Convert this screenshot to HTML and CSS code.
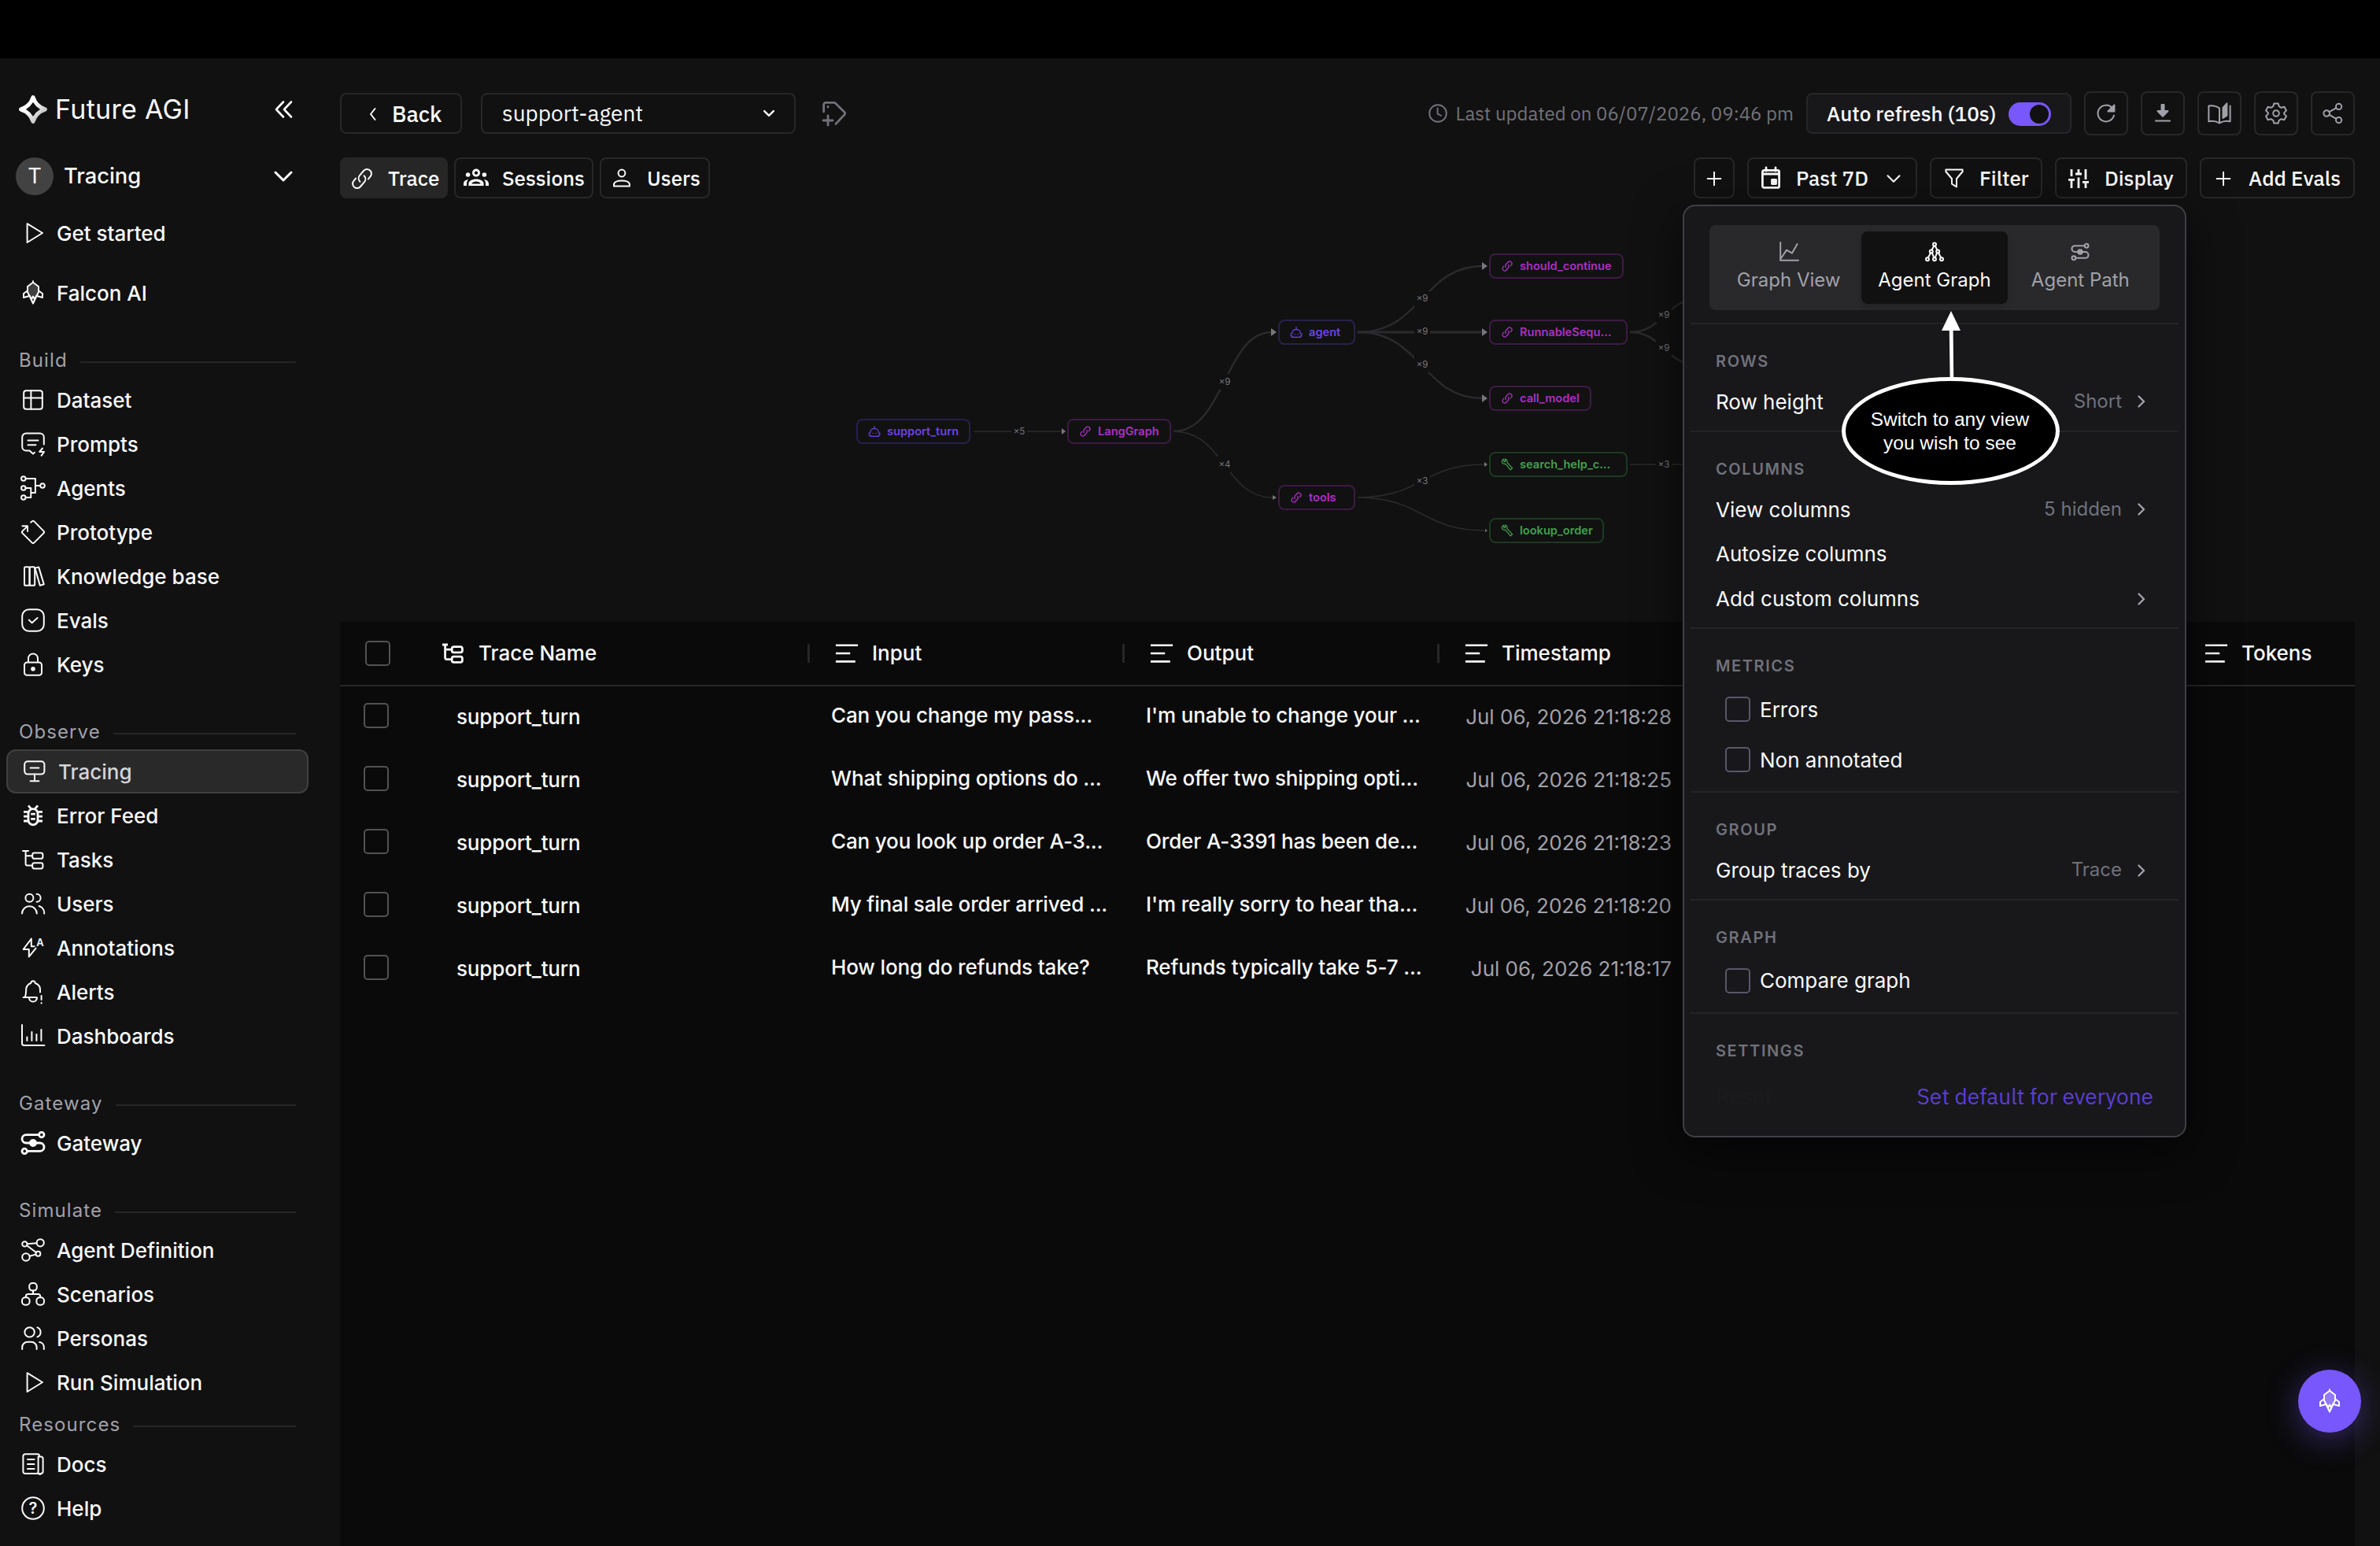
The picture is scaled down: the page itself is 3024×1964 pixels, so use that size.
FILE: index.html
```html
<!DOCTYPE html>
<html lang="en">
<head>
    <meta charset="UTF-8">
    <meta name="viewport" content="width=device-width, initial-scale=1.0">
    <title>Future AGI - Tracing</title>
    <link rel="stylesheet" href="styles.css">
</head>
<body>
    <!-- shared icons -->
    <svg class="sprite">
        <symbol id="i-play" viewBox="0 0 32 32"><path d="M8.6 4.2L28 16L8.6 28Z"/></symbol>
        <symbol id="i-falcon" viewBox="0 0 32 32">
            <path class="tint" d="M16 2.8L9 8V15L11.5 20L16 29.5L20.5 20L23 15V8Z"/>
            <path d="M8.6 13.5L4 17V22L10.2 20.2M23.4 13.5L28 17V22L21.8 20.2M11.5 19.5L14 24L16 20.5L18 24L20.5 19.5M16 1.2V3"/>
        </symbol>
        <symbol id="i-users" viewBox="0 0 32 32">
            <circle cx="11.4" cy="8.8" r="5"/>
            <path d="M20.6 3.8a5 5 0 0 1 0 10M2 28.6a9.4 9.4 0 0 1 18.8 0M23.6 19a9.4 9.4 0 0 1 6.6 9.6"/>
        </symbol>
        <symbol id="i-tree" viewBox="0 0 32 32">
            <path d="M3 5H10M6.6 5V21.6a2 2 0 0 0 2 2H15M6.6 11.2H15"/>
            <rect x="15.2" y="7.6" width="13.2" height="7.2" rx="2.4"/>
            <rect x="15.2" y="20.2" width="13.2" height="7.2" rx="2.4"/>
        </symbol>
        <symbol id="i-path" viewBox="0 0 32 32">
            <circle cx="26.8" cy="5.6" r="3.2"/>
            <circle cx="5.2" cy="26.4" r="3.2"/>
            <path d="M23.4 5.6H7.2a5.2 5.2 0 0 0 0 10.4H24.8a5.2 5.2 0 0 1 0 10.4H8.6"/>
            <circle class="dot" cx="16" cy="16" r="3.6"/>
        </symbol>
        <symbol id="i-link" viewBox="0 0 32 32">
            <path d="M13.4 19.8A6 6 0 0 1 13.2 11.6L18 6A5.6 5.6 0 0 1 26.6 13.2L24 16.4M18.6 12.2A6 6 0 0 1 18.8 20.4L14 26A5.6 5.6 0 0 1 5.4 18.8L8 15.6"/>
        </symbol>
        <symbol id="i-bot" viewBox="0 0 16 16">
            <path d="M8 1V4.6M2.8 10V9a4.4 4.4 0 0 1 4.4-4.4H8.8a4.4 4.4 0 0 1 4.4 4.4V10M2.8 10H1.2V13H2.8V14.4H13.2V13H14.8V10H13.2"/>
            <path d="M6 10V11M10 10V11"/>
        </symbol>
        <symbol id="i-tool" viewBox="0 0 16 16">
            <path d="M3.6 1.2A3.4 3.4 0 0 0 1.4 4.8C1.8 6.8 4 7.8 5.8 7.2L12.2 14.8L14.6 12.8L8 5.6C8.6 3.6 7.4 1.6 5.6 1.2V4.2L4 4.6Z"/>
        </symbol>
        <symbol id="i-lines" viewBox="0 0 32 32"><path d="M1 5H31M1 16H20.5M1 27H27.5"/></symbol>
        <symbol id="i-right" viewBox="0 0 16 16"><path d="M4.5 1.5L11 8L4.5 14.5"/></symbol>
        <symbol id="i-down" viewBox="0 0 24 24"><path d="M2 7L12 17L22 7"/></symbol>
        <symbol id="i-plus" viewBox="0 0 24 24"><path d="M12 2V22M2 12H22"/></symbol>
    </svg>

    <div class="titlebar"></div>
    <div class="app">
        <aside class="sidebar">
            <div class="brand">
                <svg class="logo" viewBox="0 0 36 36">
                    <defs>
                        <linearGradient id="metal" x1="0" y1="0" x2="1" y2="1">
                            <stop offset=".4" stop-color="#fff"/>
                            <stop offset="1" stop-color="#a8a8a8"/>
                        </linearGradient>
                    </defs>
                    <path d="M18 2.6C20.6 10.8 25.2 15.4 33.4 18C25.2 20.6 20.6 25.2 18 33.4C15.4 25.2 10.8 20.6 2.6 18C10.8 15.4 15.4 10.8 18 2.6Z" fill="none" stroke="url(#metal)" stroke-width="5" stroke-linejoin="round"/>
                </svg>
                <span class="brand-name">Future AGI</span>
                <svg class="icon collapse" viewBox="0 0 24 24"><path d="M12 2.5L3 12L12 21.5M22 2.5L13 12L22 21.5"/></svg>
            </div>
            <div class="workspace">
                <span class="avatar">T</span>
                <span>Tracing</span>
                <svg class="icon caret"><use href="#i-down"/></svg>
            </div>

            <nav>
                <a class="nav-item"><svg class="icon"><use href="#i-play"/></svg>Get started</a>
                <a class="nav-item spaced"><svg class="icon"><use href="#i-falcon"/></svg>Falcon AI</a>

                <h6 class="nav-heading">Build</h6>
                <a class="nav-item"><svg class="icon" viewBox="0 0 32 32"><rect x="4.2" y="4.2" width="23.6" height="23.6" rx="3"/><path d="M4.2 13.4H27.8M13.4 4.2V27.8"/></svg>Dataset</a>
                <a class="nav-item"><svg class="icon" viewBox="0 0 32 32"><path d="M29.8 16.5V7.5a5 5 0 0 0-5-5H7.2a5 5 0 0 0-5 5V19.5a5 5 0 0 0 5 5H11.5L16 28.6L18 26.8M9.5 11.4H22.5M9.5 17.2H19.5M28 21.5L24.2 26H30L26.6 30.8"/></svg>Prompts</a>
                <a class="nav-item"><svg class="icon" viewBox="0 0 32 32"><circle cx="3.8" cy="4" r="2.8"/><circle cx="3.8" cy="16" r="2.8"/><circle cx="3.8" cy="28" r="2.8"/><circle cx="28" cy="13" r="2.8"/><path d="M6.8 4H18.9V22H13.3M6.8 16H13.3V28H6.8M18.9 13H25"/></svg>Agents</a>
                <a class="nav-item"><svg class="icon" viewBox="0 0 32 32"><path d="M13.2 3.6L14.6 2.4a2 2 0 0 1 2.8 0L29.4 14.6a2 2 0 0 1 0 2.8L17.4 29.4a2 2 0 0 1-2.8 0L2.6 17.4a2 2 0 0 1 0-2.8L8.8 8.6M2.4 8.2H9V15"/></svg>Prototype</a>
                <a class="nav-item"><svg class="icon" viewBox="0 0 32 32"><rect x="5" y="4.2" width="6.6" height="23.6" rx="1.6"/><rect x="11.6" y="4.2" width="6.6" height="23.6" rx="1.6"/><path d="M18.4 5.6L23.2 4.4L29.8 26.4L24.8 27.8Z"/></svg>Knowledge base</a>
                <a class="nav-item"><svg class="icon" viewBox="0 0 32 32"><rect x="2.2" y="2.2" width="27.6" height="27.6" rx="8.5"/><path d="M10.8 15.6L14.6 19.2L21.6 13"/></svg>Evals</a>
                <a class="nav-item"><svg class="icon" viewBox="0 0 32 32"><rect x="5" y="13.4" width="22" height="16.4" rx="3.4"/><path d="M10 13V8.4a6 6 0 0 1 12 0V13"/><circle class="dot" cx="16" cy="21.8" r="1.8"/></svg>Keys</a>

                <h6 class="nav-heading">Observe</h6>
                <a class="nav-item active"><svg class="icon" viewBox="0 0 32 32"><rect x="3.2" y="3.2" width="25.2" height="16.4" rx="4"/><path d="M10.6 11.4H21.4M16 19.6V28.2M10.6 28.2H21.4"/></svg>Tracing</a>
                <a class="nav-item"><svg class="icon bug" viewBox="0 0 32 32"><rect x="10" y="7.6" width="12" height="20.2" rx="6"/><path d="M4 11.4H9.6M4 17.2H9.6M4 23H9.6M22.4 11.4H28M22.4 17.2H28M22.4 23H28M13.2 14.2H18.8M13.2 20.4H18.8M10 3.4L13.4 7.4M22 3.4L18.6 7.4"/></svg>Error Feed</a>
                <a class="nav-item"><svg class="icon"><use href="#i-tree"/></svg>Tasks</a>
                <a class="nav-item"><svg class="icon"><use href="#i-users"/></svg>Users</a>
                <a class="nav-item"><svg class="icon" viewBox="0 0 32 32"><path d="M13.8 4.6L3.6 18H10.8V27.4L19.6 16.6M13.8 4.6V14.2H17.6"/><text class="mark" x="25" y="14" font-size="13">A</text></svg>Annotations</a>
                <a class="nav-item"><svg class="icon" viewBox="0 0 32 32"><path d="M3.6 23H20.6M5.8 22.6C7.4 19 7 16 7.2 12.5C7.6 8.4 10 6.2 13.2 5C13.6 1.4 18.4 1.4 18.8 5C22.4 6.2 25 8.6 25 13V16.4M11 23.6a5 5 0 0 0 10 0M26.6 21V26M26.6 30V30.6"/></svg>Alerts</a>
                <a class="nav-item"><svg class="icon" viewBox="0 0 32 32"><path d="M2 2V25.6a2.4 2.4 0 0 0 2.4 2.4H30.4M8.4 17.4V22M14.4 11V22M20.4 14V22M26.4 8V22"/></svg>Dashboards</a>

                <h6 class="nav-heading">Gateway</h6>
                <a class="nav-item"><svg class="icon bold"><use href="#i-path"/></svg>Gateway</a>

                <h6 class="nav-heading">Simulate</h6>
                <a class="nav-item"><svg class="icon" viewBox="0 0 32 32"><circle cx="5.4" cy="8.4" r="3.2"/><circle cx="25.2" cy="6.8" r="4.6"/><circle cx="22.4" cy="20.8" r="3"/><circle cx="7" cy="25" r="4.8"/><path d="M8.6 8.2L20.6 7.2M8.2 10.2L19.8 19M11.6 23.8L19.4 21.6"/></svg>Agent Definition</a>
                <a class="nav-item"><svg class="icon" viewBox="0 0 32 32"><rect x="11.2" y="2" width="9.6" height="9.6" rx="4"/><rect x="2" y="20.2" width="9.6" height="9.6" rx="4"/><rect x="20.4" y="20.2" width="9.6" height="9.6" rx="4"/><path d="M16 11.6V16M6.8 20V19a3 3 0 0 1 3-3H22.2a3 3 0 0 1 3 3V20"/></svg>Scenarios</a>
                <a class="nav-item"><svg class="icon" viewBox="0 0 32 32"><circle cx="11.6" cy="8.4" r="6.2"/><path d="M21.4 2.4a6.4 6.4 0 0 1 0 12M2.2 30V27.6a6.8 6.8 0 0 1 6.8-6.8H13.8a6.8 6.8 0 0 1 6.8 6.8V30M24.2 21a6.4 6.4 0 0 1 5.6 6.4V30"/></svg>Personas</a>
                <a class="nav-item"><svg class="icon"><use href="#i-play"/></svg>Run Simulation</a>

                <h6 class="nav-heading tight">Resources</h6>
                <a class="nav-item"><svg class="icon" viewBox="0 0 32 32"><path d="M24 6.6V5.6a2.4 2.4 0 0 0-2.4-2.4H6a2.6 2.6 0 0 0-2.6 2.6V25.4a2.6 2.6 0 0 0 2.6 2.6H26.4a2.2 2.2 0 0 0 2.2-2.2V9a2.4 2.4 0 0 0-2.4-2.4H22.6V25.6a2 2 0 0 0 4 2M9 10H17.6M9 16H17.6M9 22H17.6"/></svg>Docs</a>
                <a class="nav-item"><svg class="icon" viewBox="0 0 32 32"><circle cx="16" cy="16" r="13.8"/><text class="mark" x="16" y="23.4" font-size="20">?</text></svg>Help</a>
            </nav>
        </aside>

        <main class="main">
            <div class="row header">
                <button class="btn back"><svg class="icon s14" viewBox="0 0 14 16"><path d="M9.5 1L4 8L9.5 15"/></svg>Back</button>
                <div class="select">support-agent<svg class="icon s14"><use href="#i-down"/></svg></div>
                <svg class="icon tag" viewBox="0 0 32 32"><path d="M2.6 14V5a2.6 2.6 0 0 1 2.6-2.6H15.5a3 3 0 0 1 2.3 1L29 14.4a2.4 2.4 0 0 1 0 3.2L18 29.4M8 7.4V8M8 19V31M2 25H14"/></svg>
                <div class="spacer"></div>
                <span class="updated"><svg class="icon s24" viewBox="0 0 24 24"><circle cx="12" cy="12" r="10.8"/><path d="M11.6 5.6V12.6L16 14.8"/></svg>Last updated on 06/07/2026, 09:46 pm</span>
                <div class="refresh">Auto refresh (10s)<span class="toggle"></span></div>
                <button class="square"><svg class="icon" viewBox="0 0 32 32"><path d="M26 18.6A10.4 10.4 0 1 1 23.6 9"/><path class="dot" d="M26.4 5.4V13.4H18.4Z"/></svg></button>
                <button class="square"><svg class="icon" viewBox="0 0 32 32"><path class="dot" d="M14.5 5H17.5V13H22.5L16 19.8L9.5 13H14.5Z"/><path d="M7 25.6H25"/></svg></button>
                <button class="square"><svg class="icon" viewBox="0 0 32 32"><path d="M16 9.5C12 6.4 7 5.8 2.4 6.4V26.2C7.4 25.4 12 26 16 28.4C20 26 24.6 25.4 29.6 26.2V6.4M16 9.5V28.4"/><path class="dot" d="M20.5 9L25.4 3.4V18.6L20.5 22Z"/></svg></button>
                <button class="square"><svg class="icon" viewBox="0 0 32 32"><circle cx="16" cy="16" r="3.8"/><path d="M13.4 3.4H18.6L19.8 7.2L22.6 8.8L26.4 7.8L29 12.4L26.2 15.2V16.8L29 19.6L26.4 24.2L22.6 23.2L19.8 24.8L18.6 28.6H13.4L12.2 24.8L9.4 23.2L5.6 24.2L3 19.6L5.8 16.8V15.2L3 12.4L5.6 7.8L9.4 8.8L12.2 7.2Z"/></svg></button>
                <button class="square"><svg class="icon" viewBox="0 0 32 32"><circle cx="8.2" cy="16" r="3.8"/><circle cx="23.6" cy="7.4" r="3.6"/><circle cx="23.6" cy="24.6" r="3.6"/><path d="M11.6 14.2L20.4 9.2M11.6 17.8L20.4 22.8"/></svg></button>
            </div>

            <div class="row toolbar">
                <button class="btn tab active"><svg class="icon"><use href="#i-link"/></svg>Trace</button>
                <button class="btn tab sessions"><svg class="icon solid" viewBox="0 0 32 32"><circle cx="5.6" cy="11" r="2.8"/><circle cx="26.4" cy="11" r="2.8"/><path fill-rule="evenodd" d="M16 3.6a5 5 0 1 1 0 10a5 5 0 1 1 0-10ZM16 6.4a2.2 2.2 0 1 0 0 4.4a2.2 2.2 0 1 0 0-4.4ZM6.4 25V22.4C6.4 18.8 11 16.6 16 16.6C21 16.6 25.6 18.8 25.6 22.4V25ZM10.2 22.4H21.8C20.6 20.6 18.6 19.6 16 19.6C13.4 19.6 11.4 20.6 10.2 22.4Z"/><path d="M0 25V22.4C0 19.6 2.4 17.6 6 17C4.6 18.4 4 20.4 4 22V25ZM32 25V22.4C32 19.6 29.6 17.6 26 17C27.4 18.4 28 20.4 28 22V25Z"/></svg>Sessions</button>
                <button class="btn tab people"><svg class="icon" viewBox="0 0 32 32"><circle cx="16" cy="9" r="4.4"/><path d="M6 25.6V23.6C6 20 11 18.4 16 18.4C21 18.4 26 20 26 23.6V25.6Z"/></svg>Users</button>
                <div class="spacer"></div>
                <button class="btn add"><svg class="icon s20"><use href="#i-plus"/></svg></button>
                <button class="btn range"><svg class="icon bold" viewBox="0 0 32 32"><rect x="5.4" y="5.4" width="21.2" height="22" rx="2"/><path d="M5.4 10H26.6M10 2V6M22 2V6"/><rect class="dot" x="17.5" y="17.5" width="5" height="5"/></svg>Past 7D<svg class="icon s18"><use href="#i-down"/></svg></button>
                <button class="btn filter"><svg class="icon" viewBox="0 0 32 32"><path d="M5.4 4.6H26.6V7L19 16V26.4L13 22.6V16L5.4 7Z"/></svg>Filter</button>
                <button class="btn display"><svg class="icon bug" viewBox="0 0 32 32"><path d="M7 4V13M7 17.4V28M3 17.4H11M16 4V10M12 10H20M16 14.6V28M25 4V17M21 20.4H29M25 20.4V28"/></svg>Display</button>
                <button class="btn evals"><svg class="icon s20"><use href="#i-plus"/></svg>Add Evals</button>
            </div>

            <!-- agent graph, drawn in window coordinates -->
            <svg class="graph" viewBox="432 268 2560 522">
                <g class="edges">
                    <path class="w2" d="M1237 548H1350"/>
                    <path class="w3" d="M1491 548C1556 548 1556 422 1616 422"/>
                    <path class="w2" d="M1491 548C1556 548 1556 632 1617 632"/>
                    <path class="w3" d="M1725 422C1807 422 1807 338 1884 338"/>
                    <path class="w4" d="M1725 422H1884"/>
                    <path class="w3" d="M1725 422C1807 422 1807 506 1884 506"/>
                    <path class="w2" d="M1725 632C1807 632 1807 590 1886 590"/>
                    <path class="w2" d="M1725 632C1807 632 1807 674 1886 674"/>
                    <path class="w3" d="M2071 422C2114 422 2114 380 2160 380"/>
                    <path class="w3" d="M2071 422C2114 422 2114 464 2160 464"/>
                    <path class="w2" d="M2071 590H2160"/>
                </g>
                <g class="heads">
                    <path d="M1349 544L1354 548L1349 552Z"/>
                    <path d="M1615 417L1622 422L1615 427Z"/>
                    <path d="M1617 629L1622 632L1617 635Z"/>
                    <path d="M1883 333L1890 338L1883 343Z"/>
                    <path d="M1883 417L1890 422L1883 427Z"/>
                    <path d="M1883 501L1890 506L1883 511Z"/>
                    <path d="M1886 587L1890 590L1886 593Z"/>
                    <path d="M1887 672L1890 674L1887 676Z"/>
                </g>
                <g class="counts">
                    <rect x="1285" y="538" width="20" height="20"/><text x="1295" y="552">×5</text>
                    <rect x="1546" y="475" width="20" height="20"/><text x="1556" y="489">×9</text>
                    <rect x="1546" y="580" width="20" height="20"/><text x="1556" y="594">×4</text>
                    <rect x="1797" y="370" width="20" height="20"/><text x="1807" y="383">×9</text>
                    <rect x="1797" y="411" width="20" height="20"/><text x="1807" y="425">×9</text>
                    <rect x="1797" y="453" width="20" height="20"/><text x="1807" y="467">×9</text>
                    <rect x="1797" y="602" width="20" height="20"/><text x="1807" y="615">×3</text>
                    <rect x="2104" y="390" width="20" height="20"/><text x="2114" y="404">×9</text>
                    <rect x="2104" y="432" width="20" height="20"/><text x="2114" y="446">×9</text>
                    <rect x="2104" y="580" width="20" height="20"/><text x="2114" y="594">×3</text>
                </g>
                <g class="node violet"><rect x="1089" y="533" width="143" height="30" rx="7"/><use href="#i-bot" x="1103" y="540" width="16" height="16"/><text x="1127" y="553">support_turn</text></g>
                <g class="node pink"><rect x="1357" y="533" width="130" height="30" rx="7"/><use href="#i-link" x="1371" y="540" width="16" height="16"/><text x="1395" y="553">LangGraph</text></g>
                <g class="node violet"><rect x="1625" y="407" width="96" height="30" rx="7"/><use href="#i-bot" x="1639" y="414" width="16" height="16"/><text x="1663" y="427">agent</text></g>
                <g class="node pink"><rect x="1625" y="617" width="96" height="30" rx="7"/><use href="#i-link" x="1639" y="624" width="16" height="16"/><text x="1663" y="637">tools</text></g>
                <g class="node pink"><rect x="1893" y="323" width="169" height="30" rx="7"/><use href="#i-link" x="1907" y="330" width="16" height="16"/><text x="1931" y="343">should_continue</text></g>
                <g class="node pink"><rect x="1893" y="407" width="174" height="30" rx="7"/><use href="#i-link" x="1907" y="414" width="16" height="16"/><text x="1931" y="427">RunnableSequ…</text></g>
                <g class="node pink"><rect x="1893" y="491" width="128" height="30" rx="7"/><use href="#i-link" x="1907" y="498" width="16" height="16"/><text x="1931" y="511">call_model</text></g>
                <g class="node green"><rect x="1893" y="575" width="174" height="30" rx="7"/><use href="#i-tool" x="1907" y="582" width="16" height="16"/><text x="1931" y="595">search_help_c…</text></g>
                <g class="node green"><rect x="1893" y="659" width="144" height="30" rx="7"/><use href="#i-tool" x="1907" y="666" width="16" height="16"/><text x="1931" y="679">lookup_order</text></g>
            </svg>

            <section class="table">
                <div class="tr th">
                    <div class="td check"><i class="box"></i></div>
                    <div class="td name"><svg class="icon bold"><use href="#i-tree"/></svg>Trace Name</div>
                    <div class="td"><svg class="icon"><use href="#i-lines"/></svg>Input</div>
                    <div class="td"><svg class="icon"><use href="#i-lines"/></svg>Output</div>
                    <div class="td"><svg class="icon"><use href="#i-lines"/></svg>Timestamp</div>
                    <div class="td"></div>
                    <div class="td"><svg class="icon"><use href="#i-lines"/></svg>Tokens</div>
                </div>
                <div class="tr">
                    <div class="td check"><i class="box"></i></div>
                    <div class="td name">support_turn</div>
                    <div class="td">Can you change my pass...</div>
                    <div class="td">I'm unable to change your ...</div>
                    <div class="td time">Jul 06, 2026 21:18:28</div>
                </div>
                <div class="tr">
                    <div class="td check"><i class="box"></i></div>
                    <div class="td name">support_turn</div>
                    <div class="td">What shipping options do ...</div>
                    <div class="td">We offer two shipping opti...</div>
                    <div class="td time">Jul 06, 2026 21:18:25</div>
                </div>
                <div class="tr">
                    <div class="td check"><i class="box"></i></div>
                    <div class="td name">support_turn</div>
                    <div class="td">Can you look up order A-3...</div>
                    <div class="td">Order A-3391 has been de...</div>
                    <div class="td time">Jul 06, 2026 21:18:23</div>
                </div>
                <div class="tr">
                    <div class="td check"><i class="box"></i></div>
                    <div class="td name">support_turn</div>
                    <div class="td">My final sale order arrived ...</div>
                    <div class="td">I'm really sorry to hear tha...</div>
                    <div class="td time">Jul 06, 2026 21:18:20</div>
                </div>
                <div class="tr">
                    <div class="td check"><i class="box"></i></div>
                    <div class="td name">support_turn</div>
                    <div class="td">How long do refunds take?</div>
                    <div class="td">Refunds typically take 5-7 ...</div>
                    <div class="td time">Jul 06, 2026 21:18:17</div>
                </div>
            </section>

            <div class="menu">
                <div class="views">
                    <div class="view"><svg class="icon s24" viewBox="0 0 24 24"><path d="M1.2 0V22.8H24M2 20L9 9.6L16 13.6L22.6 2"/></svg>Graph View</div>
                    <div class="view active"><svg class="icon s24" viewBox="0 0 24 24"><circle cx="12" cy="2.6" r="2"/><circle cx="7.8" cy="11.4" r="2"/><circle cx="16.2" cy="11.4" r="2"/><circle cx="3" cy="21.2" r="2"/><circle cx="12" cy="21.2" r="2"/><circle cx="21" cy="21.2" r="2"/><path d="M11.2 4.6L8.6 9.4M12.8 4.6L15.4 9.4M7 13.4L3.8 19.2M8.8 13.2L11.2 19.2M15.2 13.2L12.8 19.2M17 13.4L20.2 19.2"/></svg>Agent Graph</div>
                    <div class="view"><svg class="icon s24 bold"><use href="#i-path"/></svg>Agent Path</div>
                </div>
                <section>
                    <h6>ROWS</h6>
                    <div class="opt">Row height<span class="value">Short</span><svg class="icon s16"><use href="#i-right"/></svg></div>
                </section>
                <section>
                    <h6>COLUMNS</h6>
                    <div class="opt">View columns<span class="value">5 hidden</span><svg class="icon s16"><use href="#i-right"/></svg></div>
                    <div class="opt">Autosize columns</div>
                    <div class="opt">Add custom columns<span class="value"></span><svg class="icon s16"><use href="#i-right"/></svg></div>
                </section>
                <section>
                    <h6>METRICS</h6>
                    <label class="tick"><i class="box"></i>Errors</label>
                    <label class="tick"><i class="box"></i>Non annotated</label>
                </section>
                <section>
                    <h6>GROUP</h6>
                    <div class="opt">Group traces by<span class="value">Trace</span><svg class="icon s16"><use href="#i-right"/></svg></div>
                </section>
                <section>
                    <h6>GRAPH</h6>
                    <label class="tick"><i class="box"></i>Compare graph</label>
                </section>
                <section>
                    <h6>SETTINGS</h6>
                    <div class="actions"><span class="reset">Reset</span><span class="default">Set default for everyone</span></div>
                </section>

                <div class="callout">
                    <svg class="arrow" viewBox="0 0 24 84"><path d="M12 0L24 25H14.6L15.2 84H10.6L9.8 25H0Z"/></svg>
                    <div class="bubble">Switch to any view<br>you wish to see</div>
                </div>
            </div>

            <button class="fab"><svg class="icon"><use href="#i-falcon"/></svg></button>
        </main>
    </div>
</body>
</html>
```
FILE: styles.css
```css
:root {
    --bg: #111111;
    --table-bg: #0a0a0a;
    --line: #27272a;
    --text: #fafafa;
    --muted: #a1a1aa;
    --dim: #71717a;
    --accent: #7857fc;
    --ui: "IBM Plex Sans", Roboto, sans-serif;
}

* {
    box-sizing: border-box;
    margin: 0;
    padding: 0;
}

body {
    height: 1964px;
    overflow: hidden;
    font-family: Inter, sans-serif;
    font-size: 26px;
    line-height: 1.2;
    color: var(--text);
    background: var(--bg);
}

.sprite {
    display: none;
}

.icon {
    flex: none;
    width: 32px;
    height: 32px;
    fill: none;
    stroke: currentColor;
    stroke-width: 2;
    stroke-linejoin: round;
    stroke-linecap: round;
    overflow: visible;
}

.icon.bold { stroke-width: 2.8; }
.icon.bug { stroke-width: 2.8; stroke-linecap: butt; }
.icon.solid { fill: currentColor; stroke: none; }
.icon.s14 { width: 14px; height: 16px; }
.icon.s16 { width: 16px; height: 16px; }
.icon.s18 { width: 18px; height: 18px; stroke-width: 2.8; }
.icon.s20 { width: 20px; height: 20px; stroke-width: 2.4; }
.icon.s24 { width: 24px; height: 24px; }

.dot {
    fill: currentColor;
}

.tint {
    fill: currentColor;
    fill-opacity: .2;
}

.mark {
    fill: currentColor;
    stroke: none;
    font-weight: 600;
    text-anchor: middle;
}

.titlebar {
    height: 74px;
    background: #000;
}

.app {
    display: flex;
    height: 1890px;
}

/* sidebar */
.sidebar {
    width: 400px;
    padding: 41px 8px 0;
    font-weight: 500;
}

.brand {
    display: flex;
    align-items: center;
    height: 48px;
    padding: 0 20px 0 16px;
}

.logo {
    width: 36px;
    height: 36px;
    margin-right: 10px;
}

.brand-name {
    flex: 1;
    font-size: 34px;
    font-weight: 400;
    letter-spacing: .3px;
}

.collapse {
    width: 24px;
    height: 24px;
    stroke-width: 2.6;
}

.workspace {
    display: flex;
    align-items: center;
    gap: 13px;
    height: 48px;
    margin: 37px 0 20px;
    padding: 0 20px 0 12px;
    font-size: 27.3px;
}

.avatar {
    display: flex;
    align-items: center;
    justify-content: center;
    width: 48px;
    height: 48px;
    border-radius: 50%;
    background: #424242;
    font-weight: 400;
}

.caret {
    width: 24px;
    height: 24px;
    margin-left: auto;
    stroke-width: 3;
}

.nav-item {
    display: flex;
    align-items: center;
    gap: 14px;
    height: 56px;
    padding: 2px 18px 0;
}

.nav-item .icon {
    margin-top: -2px;
}

.nav-item.spaced {
    margin-top: 20px;
}

.nav-item.active {
    border: 2px solid #3f3f41;
    border-radius: 12px;
    background: #29292a;
    color: #d4d4d8;
}

.nav-item.active .icon {
    color: var(--text);
}

.nav-heading {
    display: flex;
    align-items: center;
    gap: 16px;
    height: 44px;
    margin-top: 36px;
    padding: 0 16px;
    font-size: 24px;
    font-weight: 400;
    letter-spacing: 1.1px;
    color: var(--muted);
}

.nav-heading.tight {
    margin-top: 4px;
}

.nav-heading::after {
    content: "";
    flex: 1;
    height: 2px;
    margin-top: 3px;
    background: #262626;
}

/* header rows */
.main {
    position: relative;
    flex: 1;
    padding: 42px 32px 0;
}

.row {
    display: flex;
    align-items: center;
    font-family: var(--ui);
    font-weight: 500;
}

.header {
    height: 56px;
}

.toolbar {
    height: 52px;
    margin: 28px 0 16px;
}

.spacer {
    flex: 1;
}

.btn,
.square {
    display: flex;
    align-items: center;
    height: 52px;
    border: 2px solid var(--line);
    border-radius: 8px;
    background: none;
    color: inherit;
    font: inherit;
}

.toolbar .btn {
    padding-top: 1px;
}

.square {
    justify-content: center;
    width: 56px;
    height: 56px;
    margin-left: 16px;
    color: var(--muted);
}

.back {
    gap: 17px;
    width: 155px;
    margin-right: 24px;
    padding-left: 33px;
    padding-top: 1px;
    font-size: 28px;
}

.select {
    display: flex;
    align-items: center;
    justify-content: space-between;
    width: 400px;
    height: 52px;
    margin-right: 33px;
    padding: 0 25px;
    border: 2px solid var(--line);
    border-radius: 8px;
    font-size: 28px;
    font-weight: 400;
}

.select .icon {
    stroke-width: 4;
}

.tag {
    color: var(--dim);
    stroke-width: 2.8;
}

.updated {
    display: flex;
    align-items: center;
    gap: 11px;
    margin-right: 16px;
    font-size: 24px;
    font-weight: 400;
    color: var(--dim);
}

.refresh {
    display: flex;
    align-items: center;
    justify-content: space-between;
    width: 337px;
    height: 52px;
    padding: 1px 24px 0;
    border: 2px solid var(--line);
    border-radius: 8px;
    background: #18181b;
}

.toggle {
    display: flex;
    align-items: center;
    justify-content: flex-end;
    width: 54px;
    height: 30px;
    padding: 3px;
    border-radius: 15px;
    background: var(--accent);
}

.toggle::after {
    content: "";
    width: 24px;
    height: 24px;
    border-radius: 50%;
    background: #111;
}

.tab {
    gap: 17px;
    width: 137px;
    margin-right: 8px;
    padding-left: 10px;
}

.tab.active {
    border-color: #262626;
    background: #262626;
}

.tab.sessions { gap: 17px; width: 177px; }
.tab.people { gap: 16px; width: 140px; padding-left: 10px; }

.btn.add {
    justify-content: center;
    width: 52px;
}

.range { gap: 16px; width: 216px; margin-left: 16px; padding-left: 12px; }
.range .s18 { margin-left: 7px; }
.filter { gap: 16px; width: 143px; margin-left: 16px; padding-left: 13px; }
.display { gap: 17px; width: 168px; margin-left: 16px; padding-left: 12px; }
.evals { gap: 22px; width: 197px; margin-left: 16px; padding-left: 18px; }

/* graph */
.graph {
    display: block;
    width: 2560px;
    height: 522px;
    font-family: Inter, sans-serif;
}

.edges path {
    fill: none;
    stroke: #2b2b2d;
}

.w2 { stroke-width: 1.6; }
.w3 { stroke-width: 2.4; }
.w4 { stroke-width: 3; }

.heads path {
    fill: #76767c;
}

.counts rect {
    fill: var(--bg);
}

.counts text {
    fill: #77777c;
    font-size: 11.5px;
    text-anchor: middle;
}

.node rect {
    fill: var(--bg);
    stroke-width: 2;
}

.node use {
    fill: none;
    stroke: currentColor;
    stroke-width: 1.2;
}

.node.pink use {
    stroke-width: 2.6;
}

.node text {
    fill: currentColor;
    font-size: 14.6px;
    font-weight: 600;
}

.violet { color: #6d42e0; }
.violet rect { stroke: #2a1f4d; }
.pink { color: #ad2fc4; }
.pink rect { stroke: #3d1a45; }
.green { color: #43a14e; }
.green rect { stroke: #1c3a21; }

/* table */
.table {
    height: 1174px;
    background: var(--table-bg);
    font-weight: 500;
}

.tr {
    display: grid;
    grid-template-columns: 96px 500px 400px 400px 320px 620px 224px;
    align-items: center;
    height: 80px;
    padding-bottom: 6px;
    letter-spacing: -.15px;
}

.th {
    height: 82px;
    padding-bottom: 0;
    border-bottom: 2px solid var(--line);
    letter-spacing: 0;
}

.td {
    display: flex;
    align-items: center;
    padding-left: 28px;
    white-space: nowrap;
}

.td.check { padding-left: 30px; }
.td.name { padding: 3px 0 0 52px; }
.td.time {
    justify-content: flex-end;
    padding: 3px 24px 0 0;
    font-weight: 400;
    letter-spacing: 0;
    color: var(--muted);
}

.th .td {
    gap: 15px;
    padding-left: 30px;
}

.th .td .icon {
    stroke-width: 2.8;
    stroke-linecap: butt;
}

.th .td:nth-child(n+3)::before {
    content: "";
    width: 3px;
    height: 24px;
    margin: 0 -15px 0 -32px;
    background: var(--line);
}

.th .td:nth-child(n+3) .icon {
    width: 30px;
    margin: 0 2px 0 32px;
}

.th .td.check { padding-left: 32px; }
.th .td.name { gap: 17px; padding: 0 0 0 31px; }

.box {
    width: 32px;
    height: 32px;
    border: 2px solid #525255;
    border-radius: 5px;
}

/* display menu */
.menu {
    position: absolute;
    top: 186px;
    left: 1738px;
    width: 640px;
    height: 1185px;
    padding: 24px 8px 0;
    border: 2px solid #3f3f46;
    border-radius: 16px;
    background: #18181b;
    box-shadow: 0 16px 60px rgba(0, 0, 0, .6);
}

.views {
    display: flex;
    height: 108px;
    margin: 0 24px 16px;
    padding: 8px;
    border-radius: 8px;
    background: #29292b;
    font-size: 24px;
    color: var(--muted);
}

.view {
    flex: 1;
    display: flex;
    flex-direction: column;
    align-items: center;
    gap: 10px;
    padding-top: 14px;
    border-radius: 8px;
}

.view.active {
    background: var(--bg);
    color: var(--text);
    box-shadow: 0 4px 8px rgba(0, 0, 0, .15);
}

.menu section {
    padding: 0 32px 8px;
    border-top: 2px solid #242427;
}

.menu h6 {
    height: 70px;
    padding-top: 35px;
    font-size: 20px;
    font-weight: 600;
    letter-spacing: 1.6px;
    color: var(--dim);
}

.opt {
    display: flex;
    align-items: center;
    height: 56.8px;
}

.opt .value {
    margin-left: auto;
    margin-right: 17px;
    font-size: 24px;
    color: var(--dim);
}

.opt .icon {
    color: var(--muted);
    margin-right: 7px;
    stroke-width: 2.4;
}

.tick {
    display: flex;
    align-items: center;
    gap: 12px;
    height: 64px;
    padding-left: 12px;
}

.tick .box {
    border-color: #5b5668;
}

.actions {
    display: flex;
    justify-content: space-between;
    align-items: center;
    height: 70px;
    font-family: var(--ui);
    font-size: 28px;
}

.reset { color: #1b1b1d; }
.default { color: #5b3fd0; }

.callout {
    position: absolute;
    top: 133px;
    left: 200px;
    display: flex;
    flex-direction: column;
    align-items: center;
    width: 277px;
}

.arrow {
    width: 24px;
    height: 84px;
    fill: #fff;
}

.callout .bubble {
    display: flex;
    align-items: center;
    justify-content: center;
    width: 277px;
    height: 137px;
    padding-right: 2px;
    border: 5px solid #fff;
    border-radius: 50%;
    background: #000;
    font: 24.5px/30px "Liberation Sans", sans-serif;
    text-align: center;
    color: #fff;
}

.fab {
    position: absolute;
    right: 24px;
    top: 1666px;
    display: flex;
    align-items: center;
    justify-content: center;
    width: 80px;
    height: 80px;
    border: none;
    border-radius: 50%;
    background: var(--accent);
    color: #fff;
    box-shadow: 0 8px 40px rgba(120, 87, 252, .4);
}
```
